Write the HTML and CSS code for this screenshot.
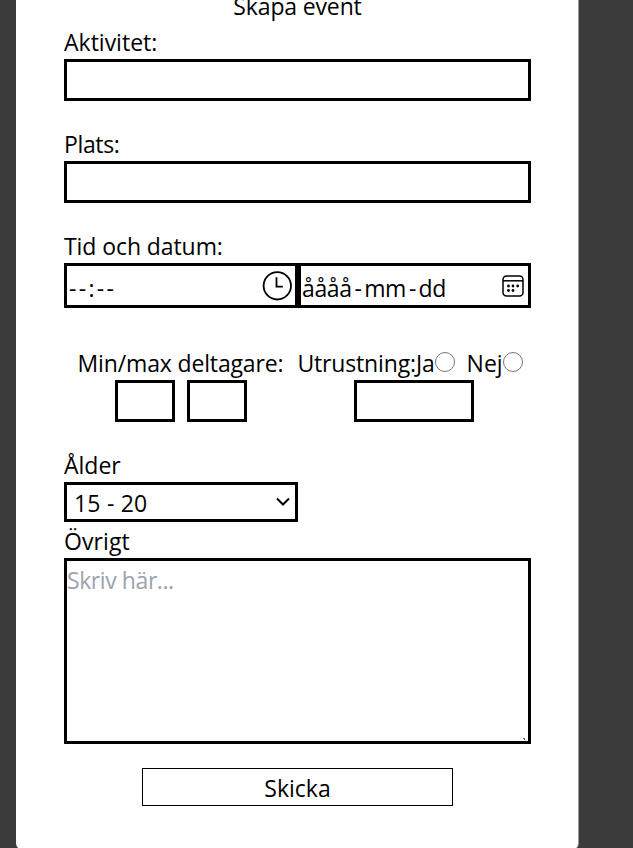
FILE: index.html
```html
<!DOCTYPE html>
<html lang="sv">
<head>
<meta charset="utf-8">
<title>Skapa event</title>
<link rel="stylesheet" href="styles.css">
</head>
<body>
<form class="card">
  <h1 class="label title"><span class="t-title">Skapa event</span></h1>
  <section class="field">
    <div class="label"><span class="t-activity">Aktivitet:</span></div>
    <div class="box"></div>
  </section>
  <section class="field">
    <div class="label"><span class="t-place">Plats:</span></div>
    <div class="box"></div>
  </section>
  <section class="field field-when">
    <div class="label"><span class="t-when">Tid och datum:</span></div>
    <div class="when">
      <div class="box picker time"><span class="t-time">--:--</span>
        <svg class="clock" width="30" height="30" viewBox="0 0 30 30" fill="none" stroke="#000" stroke-width="1.8"><circle cx="15.3" cy="14.8" r="13.7"/><path d="M14.5 6.3v9.3h6.3"/></svg>
      </div>
      <div class="box picker date"><span class="t-date">åååå<b>-</b>mm<b>-</b>dd</span>
        <svg class="calendar" width="22" height="22" viewBox="0 0 22 22" fill="none" stroke="#000" stroke-width="1.5"><rect x="1" y="1" width="20" height="20" rx="3.5"/><path d="M1 5.8h20"/><g fill="#000" stroke="none"><circle cx="6.5" cy="11" r="1.4"/><circle cx="11" cy="11" r="1.4"/><circle cx="15.7" cy="11" r="1.4"/><circle cx="6.5" cy="15.5" r="1.4"/><circle cx="11" cy="15.5" r="1.4"/></g></svg>
      </div>
    </div>
  </section>
  <section class="pair">
    <div class="group">
      <div class="label"><span class="t-count">Min/max deltagare:</span></div>
      <div class="counts"><div class="box small"></div><div class="box small"></div></div>
    </div>
    <div class="group">
      <div class="label gear"><span class="t-gear">Utrustning:Ja</span><i class="radio"></i><span class="t-no">Nej</span><i class="radio"></i></div>
      <div class="box medium"></div>
    </div>
  </section>
  <section>
    <div class="label"><span class="t-age">Ålder</span></div>
    <div class="select"><span class="t-range">15 - 20</span>
      <svg width="14" height="10" viewBox="0 0 14 10" fill="none" stroke="#000" stroke-width="2"><path d="M1 1.5l6 6 6-6"/></svg>
    </div>
  </section>
  <section>
    <div class="label"><span class="t-other">Övrigt</span></div>
    <div class="area"><span class="t-hint">Skriv här...</span><svg class="grip" width="3" height="3" viewBox="0 0 3 3"><path d="M0 0h2v2H1V1H0z" fill="#666"/></svg></div>
  </section>
  <button type="button" class="submit"><span class="t-send">Skicka</span></button>
</form>
</body>
</html>
```
FILE: styles.css
```css
* { box-sizing: border-box; }
html, body { height: 100%; }
body {
  margin: 0;
  overflow: hidden;
  background: #3b3b3b;
  color: #000;
  font: 23px/36px "Open Sans", "Noto Sans", sans-serif;
}
.card {
  width: 563px;
  height: 863px;
  margin: -13px 0 0 16px;
  padding: 0 47px 0 48px;
  background: #fff;
  border-right: 1px solid #9a9a9a;
  border-radius: 7px;
}
.label { height: 36px; margin: 0; font: inherit; white-space: nowrap; }
.label span, .submit span { position: relative; top: 1px; }
.title { text-align: center; }
.box { height: 42px; border: 3px solid #000; }
.field { margin-bottom: 24px; }
.field-when { margin-bottom: 36px; }
.when { display: flex; }
.picker { display: flex; align-items: center; justify-content: space-between; height: 45px; white-space: nowrap; }
.picker span { position: relative; top: 2px; }
.time { width: 234px; padding: 0 3px 0 2px; }
.date { width: 233px; padding: 0 4px 0 1px; }
.pair { display: flex; margin-bottom: 24px; }
.group { width: 233px; display: flex; flex-direction: column; align-items: center; }
.counts { display: flex; gap: 12px; }
.small { width: 60px; }
.medium { width: 120px; }
.gear { display: flex; margin-left: -7px; }
.radio { width: 20px; height: 20px; margin-top: 8px; border: 1px solid #767676; border-radius: 50%; }
.t-no { margin-left: 12px; }
.select { display: flex; align-items: center; justify-content: space-between; width: 234px; height: 40px; padding: 0 5px 0 7px; border: 3px solid #000; }
.select span { position: relative; top: 1px; }
.area { position: relative; height: 186px; border: 3px solid #000; color: #9ca3af; line-height: 38px; }
.grip { position: absolute; right: 2px; bottom: 0; }
.submit { display: block; width: 311px; height: 38px; margin: 24px auto 0; padding: 0; border: 1px solid #000; border-radius: 0; background: #fff; color: #000; font: inherit; }

.t-title { letter-spacing: -0.15px; }
.t-place { letter-spacing: -0.35px; }
.t-when { letter-spacing: -0.08px; }
.t-time { letter-spacing: 2.3px; }
.t-date { letter-spacing: -0.4px; }
.t-date b { margin: 0 2.6px 0 3px; font-weight: 400; }
.t-count { letter-spacing: -0.15px; }
.t-gear { letter-spacing: -0.15px; }
.t-range { letter-spacing: 0.2px; }
.t-other { letter-spacing: 0.1px; }
.t-hint { letter-spacing: -0.42px; }
```
